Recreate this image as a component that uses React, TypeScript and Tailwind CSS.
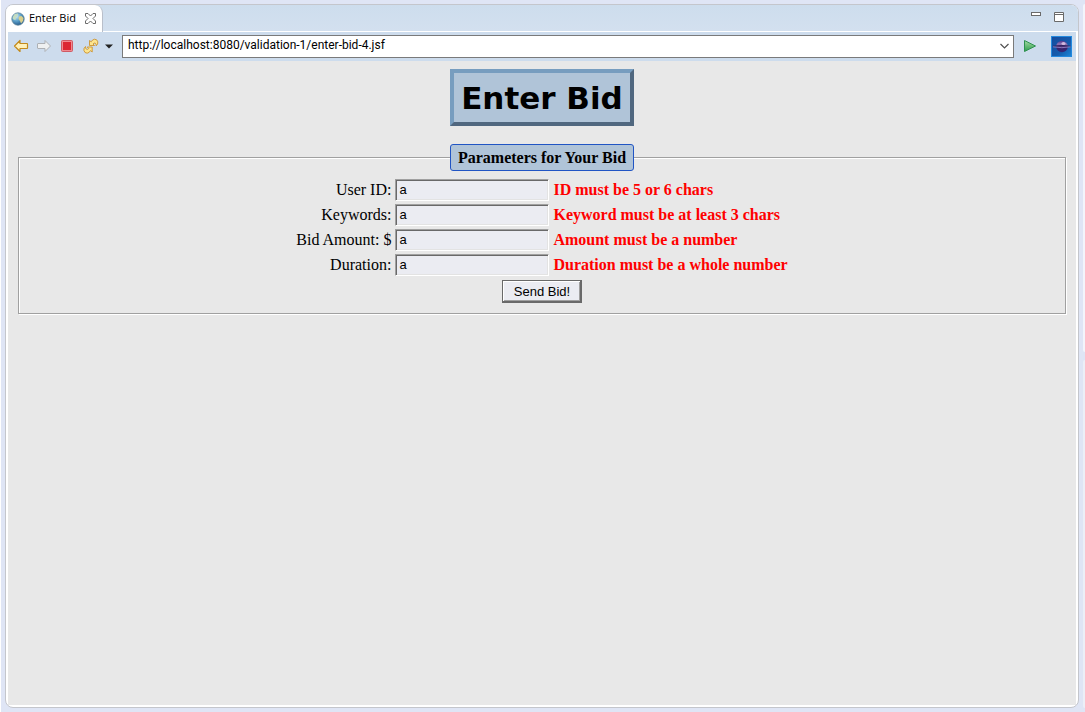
import React from "react";

type Field = { id: string; label: string; error: string };

const fields: Field[] = [
  { id: "userId", label: "User ID:", error: "ID must be 5 or 6 chars" },
  { id: "keywords", label: "Keywords:", error: "Keyword must be at least 3 chars" },
  { id: "amount", label: "Bid Amount: $", error: "Amount must be a number" },
  { id: "duration", label: "Duration:", error: "Duration must be a whole number" },
];

function Globe() {
  return (
    <svg width="14" height="14" viewBox="0 0 14 14" aria-hidden="true">
      <defs>
        <radialGradient id="globe" cx="35%" cy="28%" r="75%">
          <stop offset="0" stopColor="#d8eef8" />
          <stop offset="0.5" stopColor="#5fa3cc" />
          <stop offset="1" stopColor="#245a8c" />
        </radialGradient>
      </defs>
      <circle cx="7" cy="7" r="6.2" fill="url(#globe)" stroke="#5d8499" strokeWidth="0.8" />
      <path d="M1.500 6 3.500 2.200 7 1.500 6.500 4 5 5.500 4.500 8 2.500 7.500Z" fill="#c3dcc0" />
      <path d="M8 4.500 10.500 4 12.500 6 12 9 10 11.500 9 9 7.500 7Z" fill="#d9cf8c" />
    </svg>
  );
}

function TabClose() {
  return (
    <svg width="11" height="11" viewBox="0 0 11 11" aria-hidden="true">
      <path
        d="M.5.5H3L5.500 3 8 .5H10.500V3L8 5.500 10.500 8V10.500H8L5.500 8 3 10.500H.5V8L3 5.500.5 3Z"
        fill="#fff"
        stroke="#6b6b6b"
      />
    </svg>
  );
}

function Arrow({ forward }: { forward?: boolean }) {
  return (
    <svg width="16" height="14" viewBox="0 0 16 14" aria-hidden="true">
      {forward ? (
        <path d="M14.500 7 9 1.500V4.500H2Q1.500 4.500 1.500 5V9Q1.500 9.500 2 9.500H9V12.500Z" fill="#eef0f1" stroke="#adb0b4" strokeLinejoin="round" />
      ) : (
        <path d="M1.500 7 7 1.500V4.500H14Q14.500 4.500 14.500 5V9Q14.500 9.500 14 9.500H7V12.500Z" fill="#fff0b8" stroke="#c38a1a" strokeWidth="1.2" strokeLinejoin="round" />
      )}
    </svg>
  );
}

function Stop() {
  return (
    <svg width="12" height="12" viewBox="0 0 12 12" aria-hidden="true">
      <rect x="0.500" y="0.500" width="11" height="11" rx="1" fill="#f08a90" stroke="#cf5a64" />
      <rect x="2" y="2" width="8" height="8" fill="#dc2632" />
    </svg>
  );
}

function Refresh() {
  return (
    <svg width="16" height="16" viewBox="0 0 16 16" aria-hidden="true">
      <g fill="#fde58e" stroke="#cc9433" strokeWidth="0.9" strokeLinejoin="round">
        <path d="M6.500 2.500V7.500H11.500L10 6Q11 4.600 12.300 5.200 13.200 5.800 13.200 7.800 15.200 6.200 14.800 3.800 14.200 1.200 11.500 1.200 9.300 1.500 8.200 3.800Z" />
        <path d="M9.200 14V9H4.200L5.700 10.500Q4.700 11.800 3.400 11.200 2.500 10.600 2.500 8.500.5 10.200.9 12.400 1.500 15.200 4.200 15.200 6.400 14.800 7.500 12.600Z" />
      </g>
    </svg>
  );
}

function Play() {
  return (
    <svg width="14" height="14" viewBox="0 0 14 14" aria-hidden="true">
      <defs>
        <linearGradient id="play" x1="0" y1="0" x2="0" y2="1">
          <stop offset="0" stopColor="#a5dba2" />
          <stop offset="1" stopColor="#2c9c4c" />
        </linearGradient>
      </defs>
      <path d="M1.500 1.500 12.500 7 1.500 12.500Z" fill="url(#play)" stroke="#2e9150" strokeLinejoin="round" />
    </svg>
  );
}

function EclipseLogo() {
  return (
    <svg width="21" height="21" viewBox="0 0 21 21" role="img" aria-label="Eclipse">
      <defs>
        <linearGradient id="sky" x1="0" y1="0" x2="1" y2="1">
          <stop offset="0" stopColor="#164a9c" />
          <stop offset="0.6" stopColor="#155cad" />
          <stop offset="1" stopColor="#1c86d6" />
        </linearGradient>
        <linearGradient id="moon" x1="0" y1="0" x2="0" y2="1">
          <stop offset="0" stopColor="#4a3488" />
          <stop offset="0.3" stopColor="#9478b8" />
          <stop offset="0.55" stopColor="#3b2468" />
          <stop offset="1" stopColor="#33267a" />
        </linearGradient>
      </defs>
      <rect x="0.500" y="0.500" width="20" height="20" fill="url(#sky)" stroke="#2489de" />
      <circle cx="11" cy="10.500" r="5.800" fill="url(#moon)" />
      <path d="M2 10.300Q11 8.800 19.500 10.300" stroke="#2c1c5a" strokeWidth="1" fill="none" />
      <path d="M2 10.800Q11 12.600 19.500 10.800" stroke="#a08cd0" strokeWidth="0.8" fill="none" />
      <ellipse cx="12.500" cy="7.500" rx="2" ry="1.500" fill="#e4cdea" fillOpacity="0.8" />
    </svg>
  );
}

export default function App() {
  return (
    <div className="flex min-h-screen border-l border-white bg-[#dfe5f5] pl-1 font-['Open_Sans','Noto_Sans',sans-serif] text-xs text-black">
      <div className="my-1 flex flex-1 flex-col overflow-hidden rounded-lg border border-[#c4c6cc] bg-white">
        <header className="flex h-[26px] items-start justify-between bg-linear-to-b from-[#cddded] to-[#d3e0ef]">
          <div className="flex h-[27px] w-[97px] items-center rounded-tr-lg border-r border-[#b9bfca] bg-white pl-[5px]">
            <Globe />
            <span className="ml-1 whitespace-nowrap text-[11px]">Enter Bid</span>
            <button aria-label="Close tab" className="ml-[9px]">
              <TabClose />
            </button>
          </div>
          <div className="flex items-start gap-[13px] pr-3.5 pt-[7px]">
            <button aria-label="Minimize">
              <svg className="block" width="10" height="4" viewBox="0 0 10 4" aria-hidden="true">
                <rect x="0.500" y="0.500" width="9" height="3" fill="#fff" stroke="#6a6a6a" />
              </svg>
            </button>
            <button aria-label="Maximize">
              <svg className="block" width="10" height="10" viewBox="0 0 10 10" aria-hidden="true">
                <path d="M.5.5H9.500V9.500H.5ZM1 2.500H9" fill="#fff" stroke="#6a6a6a" />
              </svg>
            </button>
          </div>
        </header>

        <div className="mx-0.5 mt-px flex h-[29px] shrink-0 items-center bg-[#cddced] pb-px pl-[5px] pr-1">
          <button aria-label="Back"><Arrow /></button>
          <button aria-label="Forward" className="ml-[7px]"><Arrow forward /></button>
          <button aria-label="Stop" className="ml-[9px]"><Stop /></button>
          <button aria-label="Refresh" className="ml-[10px]"><Refresh /></button>
          <button aria-label="Refresh options" className="ml-1.5">
            <svg width="8" height="5" viewBox="0 0 8 5" aria-hidden="true"><path d="M0 .5H8L4 4.500Z" fill="#222" /></svg>
          </button>
          <div className="ml-[9px] flex h-[23px] flex-1 items-center border border-[#7a7a7a] bg-white">
            <input
              aria-label="Address"
              defaultValue="http://localhost:8080/validation-1/enter-bid-4.jsf"
              className="h-full min-w-0 flex-1 bg-transparent px-[5px] pb-0.5 font-['Roboto',sans-serif] text-xs outline-none"
            />
            <button aria-label="Show history" className="mr-1">
              <svg width="9" height="6" viewBox="0 0 9 6" aria-hidden="true"><path d="M.5 1 4.500 5 8.500 1" fill="none" stroke="#505050" strokeWidth="1.200" /></svg>
            </button>
          </div>
          <button aria-label="Go" className="ml-[9px]"><Play /></button>
          <span className="ml-3.5"><EclipseLogo /></span>
        </div>

        <main className="mx-0.5 mb-0.5 flex-1 bg-[#e8e8e8] px-2.5 pt-2 font-['Liberation_Serif',serif] text-base leading-[19px]">
          <h1 className="mx-auto flex h-[57px] w-fit items-center border-4 border-t-[#779dbf] border-r-[#50677f] border-b-[#50677f] border-l-[#779dbf] bg-[#b0c4d8] px-[7px] pt-0.5 font-['DejaVu_Sans',sans-serif] text-[31px] font-bold">
            Enter Bid
          </h1>

          <form onSubmit={(e) => e.preventDefault()}>
            <fieldset className="mt-[18px] border border-[#a0a0a0] pb-2.5 shadow-[inset_1px_1px_0_#fff,1px_1px_0_#fff]">
              <legend className="mx-auto rounded-[3px] border border-[#2155c4] bg-[#b0c4d8] px-[7px] py-[3px] font-bold">
                Parameters for Your Bid
              </legend>
              <table className="mx-auto mt-1.5 border-collapse">
                <tbody>
                  {fields.map((f) => (
                    <tr key={f.id} className="h-[25px]">
                      <td className="p-0 pr-1 text-right">
                        <label htmlFor={f.id}>{f.label}</label>
                      </td>
                      <td className="p-0">
                        <input
                          id={f.id}
                          defaultValue="a"
                          className="block h-[22px] w-[154px] border border-t-[#a0a0a0] border-r-white border-b-white border-l-[#a0a0a0] bg-[#ebecf2] px-[3px] font-['Liberation_Sans',sans-serif] text-[13px] shadow-[inset_1px_1px_0_#696969,inset_-1px_-1px_0_#e3e3e3] outline-none"
                        />
                      </td>
                      <td className="p-0 pl-1 font-bold text-[#ff0000]">{f.error}</td>
                    </tr>
                  ))}
                </tbody>
              </table>
              <button
                type="submit"
                className="mx-auto mt-[3px] block h-[23px] w-20 border border-[#696969] bg-[#ebecf2] font-['Liberation_Sans',sans-serif] text-[13px] leading-5 shadow-[inset_-1px_-1px_0_#696969,inset_1px_1px_0_#fff,inset_-2px_-2px_0_#a0a0a0]"
              >
                Send Bid!
              </button>
            </fieldset>
          </form>
        </main>
      </div>
      <div className="ml-1 flex w-0.5 flex-col gap-2 pb-1 pt-1" aria-hidden="true">
        <div className="flex-1 rounded-l-sm bg-[#f3f5fb]" />
        <div className="flex-1 rounded-l-sm bg-[#eceff7]" />
      </div>
    </div>
  );
}
